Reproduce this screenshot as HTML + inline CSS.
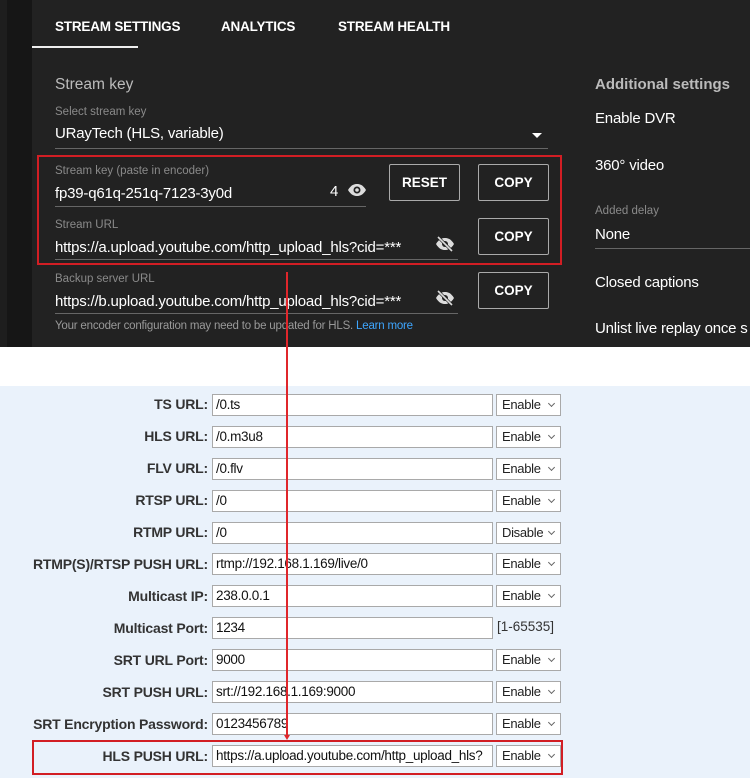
<!DOCTYPE html>
<html><head><style>
*{margin:0;padding:0;box-sizing:border-box}
body{width:750px;height:778px;overflow:hidden;font-family:"Liberation Sans",sans-serif;background:#eaf2fb;position:relative}
.dark{position:absolute;left:0;top:0;width:750px;height:347px;background:#1e1e1e}
.strip{position:absolute;left:7px;top:0;width:25px;height:347px;background:#161616}
.panel{position:absolute;left:32px;top:0;width:718px;height:347px;background:#222}
.a{position:absolute;white-space:nowrap}
.tab{color:#fff;font-size:13.5px;font-weight:bold;top:19px;letter-spacing:-0.2px}
.w{color:#fff;font-size:15px;letter-spacing:-0.2px}
.g{color:#8a8a8a;font-size:11.5px}
.h{color:#bbb;font-size:15px;font-weight:bold}
.line{position:absolute;height:1px;background:#666}
.btn{position:absolute;border:1px solid #aaa;border-radius:2px;color:#fff;font-size:13.5px;font-weight:bold;text-align:center;line-height:36px;height:37px;width:71px}
.white{position:absolute;left:0;top:347px;width:750px;height:39px;background:#fff}
.lbl{position:absolute;right:542px;font-size:14px;font-weight:bold;color:#333;white-space:nowrap;letter-spacing:-0.2px}
.inp{position:absolute;left:212px;width:281px;height:22px;background:#fff;border:1px solid #a9a9a9;font-size:13.5px;padding-left:3px;line-height:20px;color:#111;white-space:nowrap;overflow:hidden;letter-spacing:-0.3px}
.sel{position:absolute;left:496px;width:65px;height:22px;background:#fff;border:1px solid #a9a9a9;font-size:13px;padding-left:5px;line-height:20px;color:#222;letter-spacing:-0.3px}
.sel:after{content:"";position:absolute;right:6px;top:6px;width:4px;height:4px;border-right:1px solid #666;border-bottom:1px solid #666;transform:rotate(45deg)}
</style></head><body>
<div class="dark"></div><div class="strip"></div><div class="panel"></div>
<div class="a tab" style="left:55px">STREAM SETTINGS</div>
<div class="a tab" style="left:221px">ANALYTICS</div>
<div class="a tab" style="left:338px">STREAM HEALTH</div>
<div style="position:absolute;left:32px;top:46px;width:106px;height:2px;background:#eee"></div>
<div class="a h" style="left:55px;top:76px;font-weight:normal;font-size:15.5px">Stream key</div>
<div class="a g" style="left:55px;top:106px">Select stream key</div>
<div class="a w" style="left:55px;top:125px">URayTech (HLS, variable)</div>
<div class="a" style="left:532px;top:133px;width:0;height:0;border-left:5px solid transparent;border-right:5px solid transparent;border-top:5px solid #fff"></div>
<div class="line" style="left:55px;top:148px;width:493px"></div>
<div class="a g" style="left:55px;top:165px">Stream key (paste in encoder)</div>
<div class="a w" style="left:55px;top:185px">fp39-q61q-251q-7123-3y0d</div>
<div class="a w" style="left:330px;top:183px">4</div>
<svg class="a" style="left:347px;top:182px" width="20" height="16" viewBox="0 0 20 16"><path d="M1 8C4 3 7 2 10 2s6 1 9 6c-3 5-6 6-9 6S4 13 1 8z" fill="#ddd"/><circle cx="10" cy="8" r="3.5" fill="#222"/><circle cx="10" cy="8" r="1.8" fill="#ddd"/></svg>
<div class="line" style="left:55px;top:206px;width:311px"></div>
<div class="btn" style="left:389px;top:164px">RESET</div>
<div class="btn" style="left:478px;top:164px">COPY</div>
<div class="a g" style="left:55px;top:219px">Stream URL</div>
<div class="a w" style="left:55px;top:239px">https://a.upload.youtube.com/http_upload_hls?cid=***</div>
<svg class="a" style="left:435px;top:235px" width="20" height="18" viewBox="0 0 20 18"><path d="M1 9C4 4 7 3 10 3s6 1 9 6c-3 5-6 6-9 6S4 14 1 9z" fill="#ddd"/><circle cx="10" cy="9" r="3" fill="#222"/><path d="M3 2L17 16" stroke="#222" stroke-width="3"/><path d="M3 2L17 16" stroke="#ddd" stroke-width="1.6"/></svg>
<div class="line" style="left:55px;top:259px;width:403px"></div>
<div class="btn" style="left:478px;top:218px">COPY</div>
<div class="a" style="left:37px;top:155px;width:525px;height:110px;border:2px solid #d21e24"></div>
<div class="a g" style="left:55px;top:273px">Backup server URL</div>
<div class="a w" style="left:55px;top:293px">https://b.upload.youtube.com/http_upload_hls?cid=***</div>
<svg class="a" style="left:435px;top:289px" width="20" height="18" viewBox="0 0 20 18"><path d="M1 9C4 4 7 3 10 3s6 1 9 6c-3 5-6 6-9 6S4 14 1 9z" fill="#ddd"/><circle cx="10" cy="9" r="3" fill="#222"/><path d="M3 2L17 16" stroke="#222" stroke-width="3"/><path d="M3 2L17 16" stroke="#ddd" stroke-width="1.6"/></svg>
<div class="line" style="left:55px;top:313px;width:403px"></div>
<div class="btn" style="left:478px;top:272px">COPY</div>
<div class="a g" style="left:55px;top:320px;color:#999;letter-spacing:-0.2px">Your encoder configuration may need to be updated for HLS. <span style="color:#3ea6ff">Learn more</span></div>
<div class="a h" style="left:595px;top:76px">Additional settings</div>
<div class="a w" style="left:595px;top:110px">Enable DVR</div>
<div class="a w" style="left:595px;top:157px">360° video</div>
<div class="a g" style="left:595px;top:205px">Added delay</div>
<div class="a w" style="left:595px;top:226px">None</div>
<div class="line" style="left:595px;top:248px;width:155px"></div>
<div class="a w" style="left:595px;top:274px">Closed captions</div>
<div class="a w" style="left:595px;top:320px">Unlist live replay once s</div>
<div class="white"></div>
<div class="lbl" style="top:396px">TS URL:</div><div class="inp" style="top:394px">/0.ts</div><div class="sel" style="top:394px">Enable</div>
<div class="lbl" style="top:428px">HLS URL:</div><div class="inp" style="top:426px">/0.m3u8</div><div class="sel" style="top:426px">Enable</div>
<div class="lbl" style="top:460px">FLV URL:</div><div class="inp" style="top:458px">/0.flv</div><div class="sel" style="top:458px">Enable</div>
<div class="lbl" style="top:492px">RTSP URL:</div><div class="inp" style="top:490px">/0</div><div class="sel" style="top:490px">Enable</div>
<div class="lbl" style="top:524px">RTMP URL:</div><div class="inp" style="top:522px">/0</div><div class="sel" style="top:522px">Disable</div>
<div class="lbl" style="top:556px">RTMP(S)/RTSP PUSH URL:</div><div class="inp" style="top:553px">rtmp://192.168.1.169/live/0</div><div class="sel" style="top:553px">Enable</div>
<div class="lbl" style="top:588px">Multicast IP:</div><div class="inp" style="top:585px">238.0.0.1</div><div class="sel" style="top:585px">Enable</div>
<div class="lbl" style="top:620px">Multicast Port:</div><div class="inp" style="top:617px">1234</div><div class="a" style="left:497px;top:619px;font-size:13.5px;color:#333">[1-65535]</div>
<div class="lbl" style="top:652px">SRT URL Port:</div><div class="inp" style="top:649px">9000</div><div class="sel" style="top:649px">Enable</div>
<div class="lbl" style="top:684px">SRT PUSH URL:</div><div class="inp" style="top:681px">srt://192.168.1.169:9000</div><div class="sel" style="top:681px">Enable</div>
<div class="lbl" style="top:716px">SRT Encryption Password:</div><div class="inp" style="top:713px">0123456789</div><div class="sel" style="top:713px">Enable</div>
<div class="lbl" style="top:748px">HLS PUSH URL:</div><div class="inp" style="top:745px">https://a.upload.youtube.com/http_upload_hls?</div><div class="sel" style="top:745px">Enable</div>
<div class="a" style="left:32px;top:740px;width:531px;height:35px;border:2px solid #d21e24"></div>
<div class="a" style="left:286px;top:272px;width:2px;height:466px;background:#e0262b"></div>
<div class="a" style="left:284px;top:735px;width:0;height:0;border-left:3px solid transparent;border-right:3px solid transparent;border-top:5px solid #e0262b"></div>
</body></html>
